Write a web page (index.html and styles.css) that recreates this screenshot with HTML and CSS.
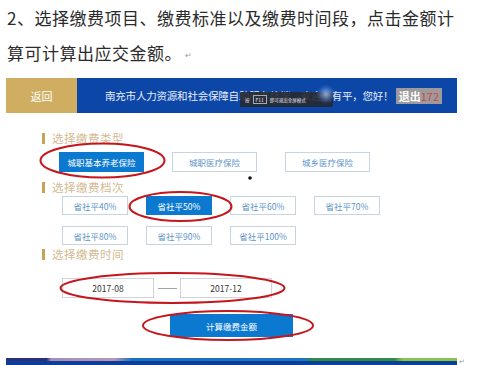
FILE: index.html
```html
<!DOCTYPE html>
<html>
<head>
    <meta charset="UTF-8">
    <title>选择缴费项目</title>
    <link rel="stylesheet" href="styles.css">
</head>
<body>
    <div class="page">
        <!--说明文字-->
        <p class="intro">2、选择缴费项目、缴费标准以及缴费时间段，点击金额计算可计算出应交金额。<span class="ret">↵</span></p>

        <!--截图区域-->
        <div class="shot">
            <div class="nav">
                <span class="btn_back">返回</span>
                <div class="nav_main">
                    <span class="nav_title">南充市人力资源和社会保障自助服务终端　欢迎王有平，您好！</span>
                    <span class="logout">退出<em>172</em></span>
                </div>
            </div>

            <div class="panel">
                <div class="sec_title sec_type">选择缴费类型</div>
                <div class="row row_type">
                    <span class="opt wide on">城职基本养老保险</span>
                    <span class="opt wide">城职医疗保险</span>
                    <span class="opt wide">城乡医疗保险</span>
                </div>

                <div class="sec_title sec_grade">选择缴费档次</div>
                <div class="grade">
                    <div class="row">
                        <span class="opt">省社平40%</span>
                        <span class="opt on">省社平50%</span>
                        <span class="opt">省社平60%</span>
                        <span class="opt">省社平70%</span>
                    </div>
                    <div class="row">
                        <span class="opt">省社平80%</span>
                        <span class="opt">省社平90%</span>
                        <span class="opt">省社平100%</span>
                    </div>
                </div>

                <div class="sec_title sec_time">选择缴费时间</div>
                <div class="row row_date">
                    <span class="date">2017-08</span>
                    <span class="dash"></span>
                    <span class="date">2017-12</span>
                </div>

                <div class="row row_calc">
                    <span class="calc">计算缴费金额</span>
                </div>
            </div>

            <div class="foot_bar"></div>
            <span class="ret ret_foot">↵</span>
        </div>

        <!--全屏提示-->
        <div class="tip">按 <b>F11</b> 即可退出全屏模式</div>
        <div class="glow"></div>

        <!--红色标注圈-->
        <svg class="marks" width="500" height="365" viewBox="0 0 500 365">
            <ellipse cx="102.5" cy="160.5" rx="62" ry="17"/>
            <ellipse cx="180.5" cy="206.5" rx="51" ry="14.5"/>
            <ellipse cx="172.5" cy="288" rx="112" ry="15"/>
            <ellipse cx="228" cy="325.5" rx="85" ry="14.5"/>
            <circle class="dot" cx="250" cy="178" r="1.8"/>
        </svg>
    </div>
</body>
</html>
```

FILE: styles.css
```css
/*全局样式*/
* {padding:0;margin:0;box-sizing:border-box;}
html,body {width:500px;height:365px;overflow:hidden;background:#fff;}
body {font-family:"Noto Sans CJK SC","Liberation Sans",sans-serif;}

.page {position:relative;width:500px;height:365px;}

/*说明文字*/
.intro {padding-left:7px;width:470px;font-size:17px;line-height:35px;letter-spacing:0.5px;color:#2b2b2b;}
.ret {display:inline-block;font-size:8px;line-height:8px;color:#999;margin-left:3px;letter-spacing:0;vertical-align:middle;}

/*截图*/
.shot {margin:8px 0 0 6px;width:451px;position:relative;}

.nav {display:flex;height:35px;}
.btn_back {width:71px;background:#cfae62;color:#fff;font-size:11px;display:flex;align-items:center;justify-content:center;}
.nav_main {flex:1;background:#0c46a7;display:flex;align-items:center;padding-left:28px;padding-right:15px;justify-content:space-between;}
.nav_title {color:#e8eefb;font-size:10.5px;letter-spacing:-0.2px;white-space:nowrap;}
.logout {background:#9c9a9c;color:#fff;font-size:11px;font-weight:bold;padding:1px 3px;line-height:14px;}
.logout em {font-style:normal;color:#d9443b;font-weight:normal;}

.panel {padding-left:36px;}
.sec_title {height:14px;line-height:14px;font-size:11.5px;color:#d3bb93;padding-left:10px;position:relative;letter-spacing:0.5px;}
.sec_title::before {content:"";position:absolute;left:0;top:2px;width:3px;height:11px;background:#c9a458;}
.sec_type {margin-top:18px;}
.sec_grade {margin-top:8px;}
.sec_time {margin-top:2px;}

.row {display:flex;align-items:center;}
.row_type {margin:7px 0 0 17px;gap:28px;}
.grade {margin:2px 0 0 20px;display:flex;flex-direction:column;gap:11px;}
.grade .row {gap:18px;}

.opt {width:66px;height:19px;border:1px solid #c8d4df;color:#5b93c9;font-size:8.5px;display:flex;align-items:center;justify-content:center;background:#fff;}
.opt.wide {width:85px;height:20px;}
.opt.on {background:#0b79d0;border-color:#0b79d0;color:#fff;}

.row_date {margin:17px 0 0 20px;}
.date {width:92px;height:20px;border:1px solid #d0d4d8;font-size:8.5px;color:#333;display:flex;align-items:center;justify-content:center;}
.dash {width:19px;height:1px;background:#9aa4ad;margin:0 3px 0 4px;}

.row_calc {margin:16px 0 0 128px;}
.calc {width:123px;height:23px;background:#0b79d0;color:#fff;font-size:8.5px;display:flex;align-items:center;justify-content:center;}

.foot_bar {margin-top:21px;height:7px;background:
    linear-gradient(90deg,#2a2f78 0,#2a2f78 9%,#a98cb5 10%,#b896b8 24%,#1d6fbf 28%,#1f74c2 66%,#2f8a48 68%,#2f8a48 86%,#8cc34f 88%,#8cc34f 100%) top/100% 3px no-repeat,
    #0b3f95;}
.ret_foot {position:absolute;right:-8px;bottom:0;font-size:7px;line-height:7px;}

/*全屏提示*/
.tip {position:absolute;left:240px;top:92px;width:93px;height:15px;background:rgba(38,42,52,0.92);color:#e6e6e6;font-size:4.5px;display:flex;align-items:center;padding-left:5px;white-space:nowrap;border-radius:1px;}
.tip b {font-weight:normal;border:1px solid #aaa;padding:0 2px;margin:0 3px;font-size:5px;}
.glow {position:absolute;left:316px;top:84px;width:20px;height:20px;border-radius:50%;background:radial-gradient(circle,rgba(150,180,230,0.9) 0,rgba(80,130,210,0.3) 50%,rgba(12,70,167,0) 70%);}

/*标注*/
.marks {position:absolute;top:0;left:0;pointer-events:none;}
.marks ellipse {fill:none;stroke:#c4161c;stroke-width:2;}
.marks .dot {fill:#111;}
```
